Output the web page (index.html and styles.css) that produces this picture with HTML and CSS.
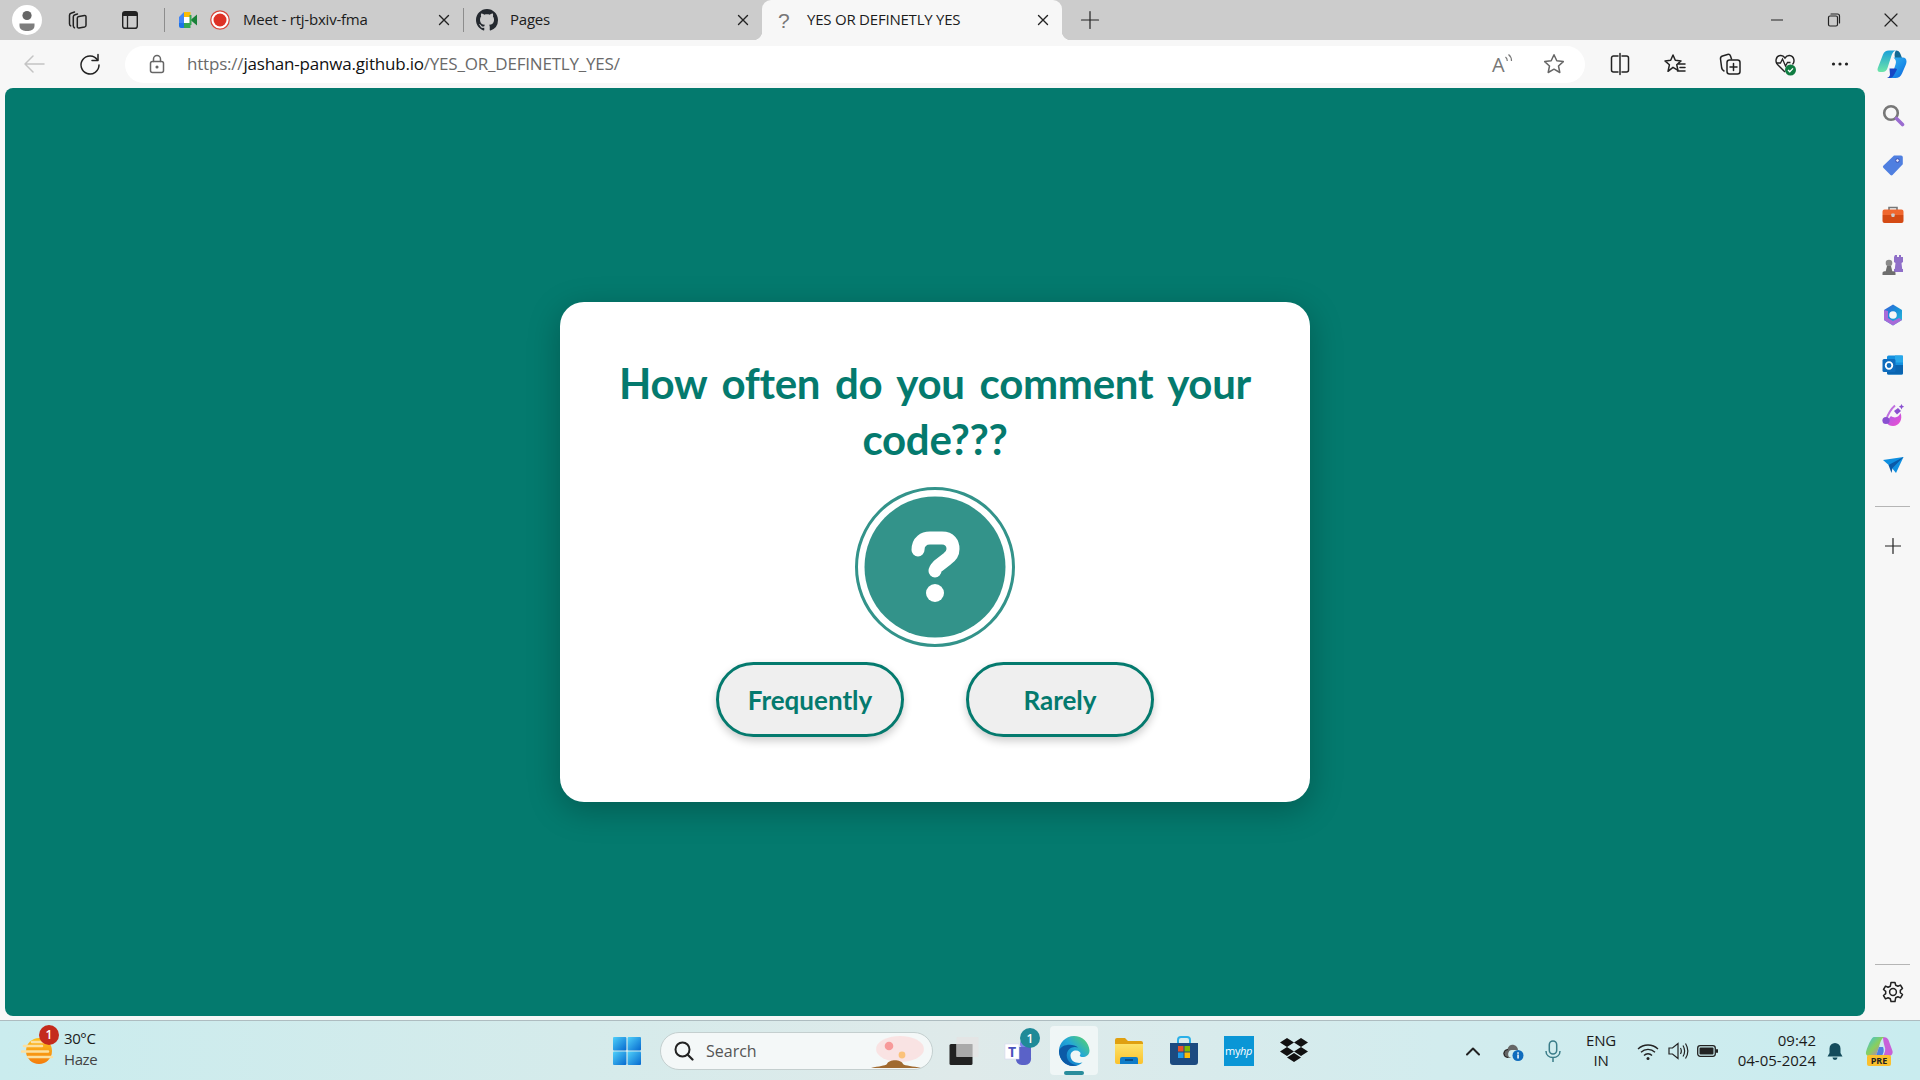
FILE: index.html
```html
<!DOCTYPE html>
<html lang="en">
<head>
<meta charset="utf-8">
<title>YES OR DEFINETLY YES</title>
<link rel="stylesheet" href="styles.css">
</head>
<body>
<svg class="defs" width="0" height="0" aria-hidden="true">
  <defs>
    <linearGradient id="gCop" x1="0" y1="0" x2="1" y2="1"><stop offset="0" stop-color="#38bdf0"/><stop offset=".6" stop-color="#1a8ce8"/><stop offset="1" stop-color="#1560d8"/></linearGradient>
    <linearGradient id="gCop2" x1="0" y1="0" x2="0" y2="1"><stop offset="0" stop-color="#1aa0d8"/><stop offset="1" stop-color="#6fe6a8"/></linearGradient>
    <linearGradient id="gEdge" x1="0" y1="1" x2="1" y2="0"><stop offset="0" stop-color="#0a6fc4"/><stop offset=".55" stop-color="#22a7d8"/><stop offset="1" stop-color="#5fd860"/></linearGradient>
    <linearGradient id="gWin" x1="0" y1="0" x2="1" y2="1"><stop offset="0" stop-color="#4fd0fa"/><stop offset="1" stop-color="#0669cf"/></linearGradient>
    <linearGradient id="gSun" x1="0" y1="0" x2="0" y2="1"><stop offset="0" stop-color="#fdc21f"/><stop offset="1" stop-color="#f47c0c"/></linearGradient>
    <linearGradient id="gFold" x1="0" y1="0" x2="0" y2="1"><stop offset="0" stop-color="#fde26a"/><stop offset="1" stop-color="#fbc22c"/></linearGradient>
    <linearGradient id="gDes" x1="0" y1="0" x2="1" y2="1"><stop offset="0" stop-color="#a85be8"/><stop offset="1" stop-color="#f04fd0"/></linearGradient>
    <linearGradient id="gM365" x1="0" y1="0" x2="1" y2="1"><stop offset="0" stop-color="#3a5fd8"/><stop offset=".5" stop-color="#1890d8"/><stop offset="1" stop-color="#30c0d8"/></linearGradient>
    <linearGradient id="gPre" x1="0" y1="0" x2="1" y2="1"><stop offset="0" stop-color="#38c0e8"/><stop offset=".5" stop-color="#8ad05a"/><stop offset="1" stop-color="#d060d8"/></linearGradient>
  </defs>
</svg>
<div class="window">
  <header class="tabstrip">
    <div class="slot s-avatar">
      <svg class="i30" viewBox="0 0 30 30"><circle cx="15" cy="15" r="15" fill="#fff"/><circle cx="15" cy="10.500" r="4.600" fill="#666"/><path d="M7.500 18.500h15v2.500a6 5 0 0 1-6 5h-3a6 5 0 0 1-6-5z" fill="#7d7d7d"/></svg>
    </div>
    <div class="slot s-coll">
      <svg class="i24 line" viewBox="0 0 24 24"><path d="M14 8.500l5.500-1c1-.2 1.500.4 1.500 1.300v8.500c0 1-.5 1.500-1.400 1.700l-5.600 1c-1 .2-1.700-.4-1.700-1.300V10c0-.8.700-1.300 1.700-1.500z"/><path d="M12.500 6 10 6.800c-1 .3-1.700 1-1.700 2v9c0 .8.400 1.500 1.200 2M9.500 4 6 5.200c-1 .4-1.500 1-1.500 2v8.500c0 1 .4 1.800 1.200 2.200"/></svg>
    </div>
    <div class="slot s-tabs">
      <svg class="i24" viewBox="0 0 24 24"><rect x="4.700" y="3.700" width="14.600" height="16.600" rx="2.400" fill="none" stroke="#222" stroke-width="1.400"/><path d="M4.700 6.100a2.400 2.400 0 0 1 2.400-2.400h9.800a2.400 2.400 0 0 1 2.400 2.400v2H4.700z" fill="#222"/><path d="M9.500 8v12" stroke="#222" stroke-width="1.300"/></svg>
    </div>
    <div class="tab-sep sep-first"></div>
    <div class="tab">
      <svg class="i20 fav" viewBox="0 0 20 20"><path d="M1 7 6 2h6v5H6v6H1z" fill="#4285f4"/><path d="M6 2h6.500v5H6z" fill="#fbbc04"/><path d="M1 13h5v5H3a2 2 0 0 1-2-2z" fill="#1a73e8"/><path d="M6 13h6.500v5H6z" fill="#34a853"/><path d="M1 7h5v6H1z" fill="#4285f4"/><path d="M12.500 7 6 7v6h6.500z" fill="#fff"/><path d="m12.500 10 6.500-5.500v11z" fill="#188038"/><path d="M12.500 5v10" stroke="#34a853" stroke-width="2"/></svg>
      <svg class="i20 rec" viewBox="0 0 20 20"><circle cx="10" cy="10" r="9.200" fill="#fff" stroke="#d9453a" stroke-width="1.200"/><circle cx="10" cy="10" r="6.500" fill="#de3226"/></svg>
      <span class="tab-title">Meet - rtj-bxiv-fma</span>
      <svg class="i12 line close" viewBox="0 0 12 12"><path d="M1.500 1.500l9 9M10.500 1.500l-9 9"/></svg>
    </div>
    <div class="tab-sep"></div>
    <div class="tab tab-gh">
      <svg class="i20 fav" viewBox="0 0 16 16"><path fill="#24292f" d="M8 0C3.580 0 0 3.580 0 8c0 3.540 2.290 6.530 5.470 7.590.4.070.550-.170.550-.380 0-.190-.010-.820-.010-1.490-2.010.370-2.530-.490-2.690-.940-.090-.230-.480-.940-.820-1.130-.280-.150-.680-.520-.010-.530.630-.010 1.080.580 1.230.820.720 1.210 1.870.870 2.330.660.070-.520.280-.870.510-1.070-1.780-.2-3.640-.890-3.640-3.950 0-.870.310-1.590.820-2.150-.080-.2-.360-1.020.080-2.120 0 0 .670-.210 2.200.820.640-.180 1.320-.270 2-.270.680 0 1.360.090 2 .270 1.530-1.040 2.200-.820 2.200-.820.440 1.100.160 1.920.080 2.120.510.560.820 1.270.820 2.150 0 3.070-1.870 3.750-3.650 3.950.290.250.540.730.540 1.480 0 1.070-.010 1.930-.010 2.200 0 .210.150.460.550.380A8.013 8.013 0 0 0 16 8c0-4.420-3.580-8-8-8z"/></svg>
      <span class="tab-title">Pages</span>
      <svg class="i12 line close" viewBox="0 0 12 12"><path d="M1.500 1.500l9 9M10.500 1.500l-9 9"/></svg>
    </div>
    <div class="tab tab-active">
      <span class="q-fav">?</span>
      <span class="tab-title">YES OR DEFINETLY YES</span>
      <svg class="i12 line close" viewBox="0 0 12 12"><path d="M1.500 1.500l9 9M10.500 1.500l-9 9"/></svg>
    </div>
    <div class="slot s-new">
      <svg class="i20 line thin" viewBox="0 0 20 20"><path d="M10 1.500v17M1.500 10h17"/></svg>
    </div>
    <div class="win-controls">
      <div class="slot s-win"><svg class="i12 line thin" viewBox="0 0 12 12"><path d="M.5 6h11"/></svg></div>
      <div class="slot s-win"><svg class="i14 line thin" viewBox="0 0 14 14"><rect x="1.500" y="3" width="9" height="10" rx="1.500"/><path d="M4 1h6.500a2 2 0 0 1 2 2v7"/></svg></div>
      <div class="slot s-win"><svg class="i14 line thin" viewBox="0 0 14 14"><path d="M1 1l12 12M13 1 1 13"/></svg></div>
    </div>
  </header>

  <nav class="toolbar">
    <div class="slot s-back"><svg class="i24 line pale" viewBox="0 0 24 24"><path d="M3 12h19M11 4l-8 8 8 8"/></svg></div>
    <div class="slot s-reload"><svg class="i24 line" viewBox="0 0 24 24"><path d="M19.500 8A9 9 0 1 0 21 13"/><path d="M20 2.500V8.500h-6"/></svg></div>
    <div class="address">
      <svg class="i20 line mid" viewBox="0 0 20 20"><rect x="3.500" y="7.500" width="13" height="11" rx="2"/><path d="M6.500 7.500V5a3.500 3.500 0 0 1 7 0v2.500"/><circle cx="10" cy="13" r=".8" fill="#555"/></svg>
      <div class="url"><span class="url-dim">https://</span><span class="url-host">jashan-panwa.github.io</span><span class="url-dim">/YES_OR_DEFINETLY_YES/</span></div>
      <div class="read"><span class="read-a">A</span><svg class="read-waves" viewBox="0 0 10 12"><path d="M1.500 5c1.200 1 1.800 2.300 1.800 4M4.500 2.500c2 1.500 3 3.800 3 6.500" fill="none" stroke="#777" stroke-width="1.200"/></svg></div>
      <svg class="i24 line mid" viewBox="0 0 24 24"><path d="m12 2.800 2.800 6 6.500.8-4.800 4.400 1.300 6.500-5.800-3.300-5.800 3.300 1.300-6.500-4.800-4.400 6.500-.8z"/></svg>
    </div>
    <div class="tools">
      <div class="slot s-tool"><svg class="i24 line" viewBox="0 0 24 24"><path d="M10 4H5.500A2 2 0 0 0 3.500 6v12a2 2 0 0 0 2 2H10M14 4h4.500a2 2 0 0 1 2 2v12a2 2 0 0 1-2 2H14M12 1.500v21"/></svg></div>
      <div class="slot s-tool"><svg class="i24 line" viewBox="0 0 24 24"><path d="m10 3 2.300 5.300 5.700.6-4.300 3.800 1.300 5.600-5-3-5 4 1.400-6.500L2 8.900l5.700-.6zM15 12h7M17 15.500h5M14.500 19h7.500"/></svg></div>
      <div class="slot s-tool"><svg class="i24 line" viewBox="0 0 24 24"><rect x="9" y="8" width="13" height="14" rx="2.500"/><path d="M15.500 11.500v7M12 15h7M6 19c-1.500-.7-2-1.500-2.300-3L2.500 7c-.2-1.500.5-2.500 2-3l5-1.500c1.400-.4 2.500.2 3 1.500l1 3"/></svg></div>
      <div class="slot s-tool"><svg class="i24" viewBox="0 0 24 24"><path d="M12 20 4.500 12.500C2 10 2.500 4 7.500 3.500 9.500 3.300 11 4.500 12 6c1-1.500 2.500-2.700 4.500-2.500 5 .5 5.500 6.500 3 9" fill="none" stroke="#222" stroke-width="1.400"/><path d="M3 11h4.500l2-4 3 7 2-3.500h3" fill="none" stroke="#222" stroke-width="1.300"/><circle cx="17.500" cy="18" r="5.500" fill="#107c41"/><path d="m15 18 1.800 1.800 3.200-3.400" fill="none" stroke="#fff" stroke-width="1.300"/></svg></div>
      <div class="slot s-tool"><svg class="i24" viewBox="0 0 24 24"><circle cx="5.500" cy="12" r="1.600" fill="#222"/><circle cx="12" cy="12" r="1.600" fill="#222"/><circle cx="18.500" cy="12" r="1.600" fill="#222"/></svg></div>
      <div class="slot s-copilot">
        <svg class="i30" viewBox="0 0 30 30"><path d="M19 1.500c2 0 3.500 1 4.500 3.500l1.500 4h-7c-.8-2.500-.5-6 1-7.500z" fill="#136a94"/><path d="M16.500 8.500H26c2 0 3.500 1.500 3.500 4 0 1-.2 2-.7 3.200L25 24.500c-1.300 3-3.500 4.500-6.500 4.500H10c2.500 0 4.500-1.500 5.500-4.500l3-9c1-3 .5-4.500-2-7z" fill="url(#gCop)"/><path d="M12.500 19.500h6.500l1 1-3 5.500c-1 2-2.500 3-4.500 3H10c1.500-.5 2.500-1.500 3-3z" fill="#1746c4"/><path d="M12 1.500h7c-2 .5-3.500 2-4.500 5L10.500 19c-.8 2.500-2.500 4-5 4H3C.8 23 0 21 .8 19L6 5.500C7 3 9 1.500 12 1.500z" fill="url(#gCop2)"/></svg>
      </div>
    </div>
  </nav>

  <div class="middle">
    <main class="viewport">
      <section class="card">
        <h1 class="question">How often do you comment your code???</h1>
        <div class="q-ring">
          <svg class="q-svg" viewBox="0 0 160 160"><circle cx="80" cy="80" r="70.500" fill="#33938a"/><path d="M63 63C63 54 69 51 75 51L87 51C95 51 98 56 98 62C98 67 95 70 92 72L83 79C81 81 80 82 80 84" fill="none" stroke="#fff" stroke-width="13" stroke-linecap="round" stroke-linejoin="round"/><circle cx="80" cy="106" r="9" fill="#fff"/></svg>
        </div>
        <div class="choices">
          <button class="choice" type="button">Frequently</button>
          <button class="choice" type="button">Rarely</button>
        </div>
      </section>
    </main>
    <aside class="sidebar">
      <div class="slot s-side"><svg class="i24" viewBox="0 0 24 24"><circle cx="10" cy="10" r="6.800" fill="none" stroke="#777" stroke-width="2.600"/><path d="m15.500 15.500 6 6" stroke="#9a6cd0" stroke-width="3.600" stroke-linecap="round"/></svg></div>
      <div class="slot s-side"><svg class="i24" viewBox="0 0 24 24"><path d="M13 2.500h7a1.800 1.800 0 0 1 1.800 1.800v7L11.500 22a1.500 1.500 0 0 1-2 0L2.300 14.800a1.500 1.500 0 0 1 0-2z" fill="#4f7fe0"/><circle cx="16.500" cy="7.500" r="1.800" fill="#e8ecff" stroke="#3a4fb0"/></svg></div>
      <div class="slot s-side"><svg class="i24" viewBox="0 0 24 24"><path d="M8 7V4.500h8V7" fill="none" stroke="#777" stroke-width="1.600"/><path d="M1.500 8.500a2 2 0 0 1 2-2h17a2 2 0 0 1 2 2V12h-21z" fill="#f0672e"/><path d="M1.500 12h21v6a2 2 0 0 1-2 2h-17a2 2 0 0 1-2-2z" fill="#d44a14"/><rect x="10.300" y="10.500" width="3.400" height="3.400" rx=".8" fill="#ccc"/></svg></div>
      <div class="slot s-side"><svg class="i24" viewBox="0 0 24 24"><path d="M15 3h2v2h2V3h2v2h2v5l-1.500 1 .7 6H23v3h-9v-3h.8l.7-6L14 10V5z" fill="#8f6fc8" transform="translate(-1 -1)"/><circle cx="8" cy="10" r="3.300" fill="#8a8a8a"/><path d="M6 13h4l1.500 6h-7zM1.500 20c0-1 1-1.700 2-1.700h9c1 0 2 .7 2 1.700v2h-13z" fill="#6e6e6e"/></svg></div>
      <div class="slot s-side"><svg class="i24" viewBox="0 0 24 24"><path d="M12 1.500 21 7v10l-9 5.500L3 17V7z" fill="url(#gM365)"/><path d="M3 7v10l9 5.500 9-5.500-3-2-6 3-5-3V8z" fill="#a86ad8"/><circle cx="12" cy="12" r="3.800" fill="#f7f7f7"/></svg></div>
      <div class="slot s-side"><svg class="i24" viewBox="0 0 24 24"><rect x="6" y="2.500" width="16" height="19" rx="1.500" fill="#1490df"/><rect x="14" y="2.500" width="8" height="7" fill="#28a8ea"/><path d="M6 12h16v8a1.500 1.500 0 0 1-1.500 1.500H7.500A1.500 1.500 0 0 1 6 20z" fill="#0a64b0"/><rect x="1.500" y="6" width="13" height="13" rx="1.500" fill="#0f6cbd"/><circle cx="8" cy="12.500" r="3.300" fill="none" stroke="#fff" stroke-width="1.800"/></svg></div>
      <div class="slot s-side"><svg class="i24" viewBox="0 0 24 24"><path d="M10 13c4 3 8 1 9.500-3 2.500 6-1 13-7.500 13-3 0-5-1-6-3 1-3 2-5 4-7z" fill="url(#gDes)"/><path d="M5 17C7 11 10 6 14 2.500" fill="none" stroke="#c070e0" stroke-width="2"/><circle cx="5" cy="17.500" r="3.600" fill="#8a50d0"/><path d="M13 8 17 5l3 3-4 3.500z" fill="#8a50d0"/><path d="M20.500 1l.9 1.800 1.800.9-1.800.9-.9 1.800-.9-1.800-1.800-.9 1.800-.9z" fill="#8a50d0"/></svg></div>
      <div class="slot s-side"><svg class="i24" viewBox="0 0 24 24"><path d="M2 7 22.500 4 15 20l-4.500-5.500z" fill="#0f8fe0"/><path d="M22.500 4 7.500 12l3 8 1-5z" fill="#0a5aa8"/></svg></div>
      <div class="side-rule side-rule-a"></div>
      <div class="slot s-side"><svg class="i16 line thin" viewBox="0 0 16 16"><path d="M8 .5v15M.5 8h15"/></svg></div>
      <div class="side-rule side-rule-b"></div>
      <div class="slot s-side s-gear"><svg class="i24 line" viewBox="0 0 24 24"><circle cx="12" cy="12" r="3.400"/><path d="M10 2.500h4l.7 2.800 2.200 1 2.600-1.200 2 3.400-2.200 1.800v2.400l2.200 1.800-2 3.400-2.600-1.200-2.200 1L14 21.500h-4l-.7-2.800-2.200-1-2.600 1.200-2-3.400 2.200-1.800v-2.400L2.500 9.500l2-3.400 2.600 1.200 2.200-1z"/></svg></div>
    </aside>
  </div>

  <footer class="taskbar">
    <div class="tb-weather">
      <div class="sun">
        <svg class="i34" viewBox="0 0 34 34"><circle cx="18" cy="17" r="13" fill="url(#gSun)"/><g stroke="#fbe0a0" stroke-width="2.600" stroke-linecap="round"><path d="M3 12h18M1 17.500h26M7 23h24M11 8h12"/></g></svg>
        <span class="badge">1</span>
      </div>
      <div class="weather-text"><span>30°C</span><span class="haze">Haze</span></div>
    </div>
    <div class="slot s-start">
      <svg class="i28" viewBox="0 0 28 28"><g fill="url(#gWin)"><rect x="0" y="0" width="13.400" height="13.400" rx="1"/><rect x="14.600" y="0" width="13.400" height="13.400" rx="1"/><rect x="0" y="14.600" width="13.400" height="13.400" rx="1"/><rect x="14.600" y="14.600" width="13.400" height="13.400" rx="1"/></g></svg>
    </div>
    <div class="searchbox">
      <svg class="i20" viewBox="0 0 20 20"><circle cx="8.500" cy="8.500" r="7" fill="none" stroke="#222" stroke-width="2"/><path d="m13.500 13.500 5 5" stroke="#222" stroke-width="2.200" stroke-linecap="round"/></svg>
      <span class="search-label">Search</span>
      <svg class="art" viewBox="0 0 62 36"><ellipse cx="36" cy="16" rx="24" ry="13" fill="#fbdcdc" opacity=".75"/><circle cx="25" cy="13" r="4.300" fill="#f79a9a"/><circle cx="38" cy="22" r="3.400" fill="#fbc27a"/><path d="M7 35c8-2 14-2 16-4 2-5 14-5 16 0 2 2 10 2 18 4z" fill="#a06a30"/></svg>
    </div>
    <div class="slot s-task s-view"><svg class="i34" viewBox="0 0 34 34"><rect x="4.500" y="10" width="23" height="21" rx="1.500" fill="#222"/><rect x="11.500" y="3" width="22" height="20" rx="1" fill="#e4e4e4" fill-opacity=".9"/><rect x="11.500" y="10" width="16" height="13" fill="#aaa"/></svg></div>
    <div class="slot s-task s-teams">
      <svg class="i34" viewBox="0 0 34 34"><circle cx="22" cy="10" r="4" fill="#7b83eb"/><path d="M14 13h15v11a6 6 0 0 1-6 7h-3a6 6 0 0 1-6-7z" fill="#5a62c8"/><rect x="3" y="10" width="14" height="15" fill="#fff" stroke="#d8d8f0" stroke-width=".6"/><text x="10" y="22.500" class="t-glyph">T</text></svg>
      <span class="badge badge-teal">1</span>
    </div>
    <div class="slot s-task s-edge">
      <svg class="i32" viewBox="0 0 32 32"><path d="M16 1C7.500 1 1 8 1 16c0 8.500 6.500 15 14 15 3.500 0 7-1 9.500-3.500-5 1.500-12-.5-12-7 0-3 2.500-5 5.500-5 3 0 4.500 2 4.500 3 0 1.500-1.500 2 0 3 2 1.500 9 .5 9-6C31 7 24 1 16 1z" fill="url(#gEdge)"/><path d="M1 16c0 8.500 6.500 15 14 15 1.500 0 3-.3 4.500-.8C12 30 7.500 24 9 18c1-4 5.500-7.500 11-5.500C15 8 3 9 1 16z" fill="#0c5aa6"/></svg>
      <span class="edge-dot"></span>
    </div>
    <div class="slot s-task"><svg class="i32" viewBox="0 0 32 32"><path d="M2 5a2 2 0 0 1 2-2h8l3 3h13a2 2 0 0 1 2 2v3H2z" fill="#e0a010"/><path d="M2 9h28v18a2 2 0 0 1-2 2H4a2 2 0 0 1-2-2z" fill="url(#gFold)"/><path d="M7 24a2 2 0 0 1 2-2h14a2 2 0 0 1 2 2v5H7z" fill="#0f7cc8"/><path d="M12 25h8" stroke="#063d70" stroke-width="1.400"/></svg></div>
    <div class="slot s-task"><svg class="i32" viewBox="0 0 32 32"><path d="M10 8V5a3 3 0 0 1 3-3h6a3 3 0 0 1 3 3v3" fill="none" stroke="#2ab0e8" stroke-width="2"/><path d="M2 8h28v19a3 3 0 0 1-3 3H5a3 3 0 0 1-3-3z" fill="#1c4a80"/><rect x="10" y="11" width="5.500" height="5.500" fill="#e8512a"/><rect x="16.500" y="11" width="5.500" height="5.500" fill="#7fba00"/><rect x="10" y="17.500" width="5.500" height="5.500" fill="#1e9bea"/><rect x="16.500" y="17.500" width="5.500" height="5.500" fill="#fbbc09"/></svg></div>
    <div class="slot s-task"><div class="myhp">my<i>hp</i></div></div>
    <div class="slot s-task"><svg class="i30" viewBox="0 0 30 30"><path d="M8 2 15 6.500 8 11 1 6.500zM22 2l7 4.500L22 11l-7-4.500zM8 11l7 4.500L8 20l-7-4.500zM22 11l7 4.500L22 20l-7-4.500zM15 17l7 4.500L15 26l-7-4.500z" fill="#111"/></svg></div>
    <div class="tray">
      <div class="slot s-t40"><svg class="i16 line heavy" viewBox="0 0 16 16"><path d="M2 11.500 8 5.500l6 6"/></svg></div>
      <div class="slot s-t40"><svg class="i22" viewBox="0 0 22 22"><path d="M6 18a4.500 4.500 0 0 1-.5-9C6.500 5.500 9.500 4 12 5c2.500.8 4 3 4 5H11a4 4 0 0 0-1.500 8z" fill="#666"/><path d="M6 17.500a4 4 0 0 1 0-8" fill="none" stroke="#222"/><circle cx="16" cy="15.500" r="5.500" fill="#0f6cbd"/><rect x="15.300" y="14.500" width="1.500" height="4" fill="#fff"/><rect x="15.300" y="12.300" width="1.500" height="1.500" fill="#fff"/></svg></div>
      <div class="slot s-t40"><svg class="i24" viewBox="0 0 24 24"><rect x="8.300" y="2" width="7.400" height="13" rx="3.700" fill="none" stroke="#3a7c88" stroke-width="1.500"/><path d="M5 12c0 4 3 6.500 7 6.500s7-2.500 7-6.500M12 18.500V23" fill="none" stroke="#3a7c88" stroke-width="1.500"/></svg></div>
      <div class="lang"><span>ENG</span><span>IN</span></div>
      <div class="slot s-t30 s-wifi"><svg class="i22" viewBox="0 0 22 22"><path d="M1 9a14.500 14.500 0 0 1 20 0M4 12.300a10 10 0 0 1 14 0M7 15.500a5.500 5.500 0 0 1 8 0" fill="none" stroke="#222" stroke-width="1.300"/><circle cx="11" cy="18.500" r="1.500" fill="#222"/></svg></div>
      <div class="slot s-t30"><svg class="i22" viewBox="0 0 22 22"><path d="M2 8h3.500L11 3.500v15L5.500 14H2z" fill="none" stroke="#222" stroke-width="1.200"/><path d="M13.500 8c1 1.800 1 4.200 0 6M16 5.500c2 3.400 2 7.600 0 11M18.500 3.500c2.800 4.500 2.800 10.500 0 15" fill="none" stroke="#222" stroke-width="1.200"/></svg></div>
      <div class="slot s-t30"><svg class="i22" viewBox="0 0 22 22"><rect x=".7" y="5.700" width="17.600" height="10.600" rx="2.500" fill="none" stroke="#222" stroke-width="1.300"/><rect x="2.500" y="7.500" width="14" height="7" rx="1" fill="#222"/><rect x="19" y="9" width="2" height="4" rx="1" fill="#222"/></svg></div>
      <div class="clock"><span>09:42</span><span>04-05-2024</span></div>
      <div class="slot s-bell"><svg class="i18" viewBox="0 0 18 18"><path d="M9 1a5.500 5.500 0 0 1 5.500 5.500V11l2 3.500h-15l2-3.500V6.500A5.500 5.500 0 0 1 9 1z" fill="#154c5c"/><path d="M6.500 15.500h5a2.500 2.500 0 0 1-5 0z" fill="#154c5c"/></svg></div>
      <div class="slot s-pre">
        <svg class="i30" viewBox="0 0 30 30"><path d="M18 1c3 0 4.500 1 5.500 3l4 11c.7 2.500-1 5-3.500 5h-6c2-3 3-7 1.500-10-1-3-1.500-7-1.500-9z" fill="#c860d8"/><path d="M9 1h10c-3 2-4 6-5 10l-3 9H4c-2.500 0-3.500-2-3-4C2 12 4 7 6 4c.7-1.500 1.800-3 3-3z" fill="url(#gPre)"/><path d="M11 20l3-9h4c1.500 3 .5 7-1.500 9z" fill="#5080e0"/></svg>
        <span class="pre">PRE</span>
      </div>
    </div>
  </footer>
</div>
</body>
</html>
```
FILE: styles.css
```css
* { box-sizing: border-box; }
html, body { margin: 0; height: 100%; overflow: hidden; }
body { font-family: "Open Sans", "Noto Sans", sans-serif; color: #1b1b1b; }
.defs { position: absolute; }
.window { width: 1920px; height: 1080px; display: flex; flex-direction: column; background: #f7f7f7; }
.slot { display: flex; align-items: center; justify-content: center; flex: none; position: relative; }
svg { display: block; flex: none; }
.i12 { width: 12px; height: 12px; }
.i14 { width: 14px; height: 14px; }
.i16 { width: 16px; height: 16px; }
.i18 { width: 18px; height: 18px; }
.i20 { width: 20px; height: 20px; }
.i22 { width: 22px; height: 22px; }
.i24 { width: 24px; height: 24px; }
.i28 { width: 28px; height: 28px; }
.i30 { width: 30px; height: 30px; }
.i32 { width: 32px; height: 32px; }
.i34 { width: 34px; height: 34px; }
.line { fill: none; stroke: #222; stroke-width: 1.500; stroke-linecap: round; stroke-linejoin: round; }
.line.thin { stroke-width: 1.200; }
.line.heavy { stroke-width: 2; }
.line.pale { stroke: #c4c4c4; }
.line.mid { stroke: #666; }

/* tab strip */
.tabstrip { height: 40px; background: #cccccc; display: flex; align-items: center; flex: none; }
.s-avatar { width: 54px; }
.s-coll { width: 46px; }
.s-tabs { width: 60px; }
.tab-sep { width: 1px; height: 24px; background: #8d8d8d; flex: none; }
.sep-first { margin-left: 4px; }
.tab { width: 298px; height: 40px; display: flex; align-items: center; flex: none; padding: 0 13px; font-size: 15px; }
.tab .fav { margin-right: 12px; }
.tab .rec { margin-right: 13px; width: 20px; }
.tab-title { flex: 1; letter-spacing: -.22px; white-space: nowrap; margin-top: -2px; }
.close { stroke-width: 1.400; }
.tab-gh { padding-left: 12px; }
.tab-gh .fav { width: 22px; height: 22px; margin-right: 12px; }
.tab-active { width: 300px; background: #f7f7f7; border-radius: 9px 9px 0 0; position: relative; padding-left: 16px; }
.tab-active::before, .tab-active::after { content: ""; position: absolute; bottom: 0; width: 9px; height: 9px; }
.tab-active::before { left: -9px; background: radial-gradient(circle at 0 0, transparent 9px, #f7f7f7 9.500px); }
.tab-active::after { right: -9px; background: radial-gradient(circle at 100% 0, transparent 9px, #f7f7f7 9.500px); }
.q-fav { width: 14px; font-size: 21px; color: #777; margin-right: 15px; line-height: 1; font-family: "Liberation Sans", sans-serif; }
.s-new { width: 56px; }
.win-controls { margin-left: auto; display: flex; padding-right: 1px; }
.s-win { width: 57px; }

/* toolbar */
.toolbar { height: 48px; display: flex; align-items: center; padding-left: 11px; flex: none; }
.s-back { width: 46px; }
.s-reload { width: 66px; }
.address { margin-left: 2px; width: 1460px; height: 37px; background: #fff; border-radius: 19px; display: flex; align-items: center; padding: 0 19px 0 22px; }
.url { flex: 1; margin-left: 20px; font-size: 17px; letter-spacing: -.2px; white-space: nowrap; margin-top: -1px; }
.url-dim { color: #6a6a6a; }
.url-host { color: #111; }
.read { width: 24px; height: 24px; margin-right: 26px; display: flex; align-items: flex-start; flex: none; }
.read-a { font-size: 20px; line-height: 26px; color: #777; }
.read-waves { width: 10px; height: 12px; margin-left: -1px; }
.tools { margin-left: 7px; display: flex; align-items: center; }
.s-tool { width: 55px; }
.s-copilot { width: 50px; }

/* middle */
.middle { flex: 1; display: flex; min-height: 0; }
.viewport { flex: 1; margin: 0 0 4px 5px; background: #047a6e; border-radius: 8px; display: flex; align-items: center; justify-content: center; }
.card { width: 750px; height: 500px; background: #fff; border-radius: 24px; box-shadow: 0 8px 32px rgba(0, 0, 0, .25); padding: 53px 40px 0; display: flex; flex-direction: column; align-items: center; }
.question { margin: 0 0 20px; font: 700 42px/56px "Lato", sans-serif; color: #047a6e; text-align: center; word-spacing: 5px; letter-spacing: -.3px; }
.q-ring { width: 160px; height: 160px; border-radius: 50%; border: 3px solid #33938a; display: flex; align-items: center; justify-content: center; flex: none; }
.q-svg { width: 160px; height: 160px; flex: none; }
.choices { display: flex; gap: 62px; margin-top: 15px; }
.choice { width: 188px; height: 75px; border: 3px solid #047a6e; border-radius: 38px; background: #efefef; color: #047a6e; font: 700 26px "Lato", sans-serif; box-shadow: 0 4px 8px rgba(0, 0, 0, .2); padding: 0; }

/* sidebar */
.sidebar { width: 55px; flex: none; display: flex; flex-direction: column; align-items: center; padding: 2px 0 3px; }
.s-side { width: 54px; height: 50px; }
.side-rule { width: 35px; height: 1px; background: #b5b5b5; flex: none; }
.side-rule-a { margin: 16px 0 14px; }
.side-rule-b { margin-top: auto; margin-bottom: 2px; }

/* taskbar */
.taskbar { height: 60px; flex: none; border-top: 1px solid #aebcc0; background: linear-gradient(90deg, #caecee 0%, #d5ebeb 30%, #dfeaea 50%, #d2ecee 75%, #c9ecef 100%); display: flex; align-items: center; }
.tb-weather { width: 600px; display: flex; align-items: center; padding-left: 21px; flex: none; }
.sun { width: 34px; height: 34px; position: relative; margin-right: 9px; }
.badge { position: absolute; top: -9px; right: -4px; width: 20px; height: 20px; border-radius: 50%; background: #c42b1c; color: #fff; font-size: 12px; font-weight: 600; display: flex; align-items: center; justify-content: center; }
.weather-text { display: flex; flex-direction: column; font-size: 15px; line-height: 21px; letter-spacing: -.4px; margin-top: -3px; }
.haze { color: #444; }
.s-start { width: 54px; }
.searchbox { width: 273px; height: 38px; margin-left: 6px; border-radius: 19px; background: #f4f8f8; border: 1px solid #c4cfcf; display: flex; align-items: center; padding-left: 13px; flex: none; }
.search-label { margin-left: 12px; font-size: 16px; color: #555; flex: 1; }
.art { width: 62px; height: 36px; margin-right: 6px; }
.s-task { width: 55px; height: 59px; }
.s-view { margin-left: 1px; }
.s-teams { margin-left: 2px; }
.badge-teal { background: #1f8a98; top: 7px; right: 6px; }
.s-edge::before { content: ""; position: absolute; left: 4px; right: 3px; top: 5px; bottom: 5px; background: rgba(255, 255, 255, .55); border-radius: 4px; }
.s-edge svg { position: relative; }
.edge-dot { position: absolute; left: 18px; top: 50px; width: 20px; height: 4px; border-radius: 2px; background: #2a8d9c; }
.myhp { width: 30px; height: 30px; background: #0a96d6; color: #fff; font-size: 11px; display: flex; align-items: center; justify-content: center; letter-spacing: -.4px; }
.tray { margin-left: auto; display: flex; align-items: center; padding-right: 14px; }
.s-t40 { width: 40px; }
.s-t30 { width: 30px; }
.s-wifi { margin-left: 4px; }
.lang { width: 56px; display: flex; flex-direction: column; align-items: center; font-size: 15px; line-height: 20px; letter-spacing: -.2px; margin-top: -1px; }
.clock { width: 93px; display: flex; flex-direction: column; align-items: flex-end; font-size: 15px; line-height: 20px; white-space: nowrap; margin-top: -1px; }
.s-bell { width: 38px; }
.s-pre { width: 52px; height: 40px; }
.pre { position: absolute; left: 13px; top: 24px; width: 24px; height: 11px; background: #fbc02d; border-radius: 2px; font-size: 9px; font-weight: 700; line-height: 11px; text-align: center; color: #222; }
.t-glyph { font-family: "Open Sans", sans-serif; font-size: 14px; font-weight: 700; fill: #4b53bc; text-anchor: middle; }
```
